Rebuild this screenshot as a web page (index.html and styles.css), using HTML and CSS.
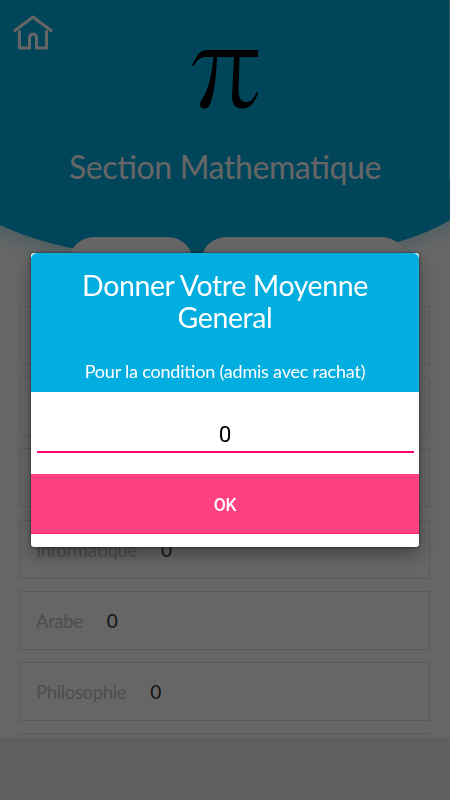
FILE: index.html
```html
<!DOCTYPE html>
<html lang="fr">
<head>
    <meta charset="UTF-8">
    <meta name="viewport" content="width=device-width, initial-scale=1.0">
    <title>Section Mathematique</title>
    <link rel="stylesheet" href="styles.css">
</head>
<body>
    <div class="page">
        <header class="header">
            <svg class="header-bg" viewBox="0 0 450 300">
                <path class="glow" d="M-30 0H480V204Q380 258 225 260Q60 258 -30 210Z"/>
                <path class="curve" d="M0 0H449V180H450V220Q385 260 225 262Q75 261 0 225Z"/>
            </svg>
            <svg class="home" viewBox="0 0 40 36">
                <path d="M2 15.500 20 2 38 15.500M6.500 16.500V33H16.500V23.500Q16.500 19 20 19T23.500 23.500V33H33.500V16.500"/>
            </svg>
            <svg class="pi" viewBox="0 0 66 60">
                <path d="M66 1V8H47.500L46.500 40C46.500 49 49 53 54 53C59 53 62 49 64.500 43L66 44C63 54 57 59.500 50 59.500C43 59.500 40 55 40 47L42 8H25C24 27 23 42 18.500 54C17 58 15 59.500 12.500 59.500C9.500 59.500 8 57.500 8 55.500C8 53 10 50 13 45C17 37 20 24 21.500 8H15C8 8 6 10 1.500 17L0 16L5 7C8 2 11 1 18 1Z"/>
            </svg>
            <h1>Section Mathematique</h1>
            <div class="tabs">
                <div class="tab tab-small"></div>
                <div class="tab tab-large"></div>
            </div>
        </header>

        <main class="grades">
            <div class="grade"></div>
            <div class="grade"></div>
            <div class="grade"></div>
            <div class="grade"><label>Informatique</label><span>0</span></div>
            <div class="grade"><label>Arabe</label><span>0</span></div>
            <div class="grade"><label>Philosophie</label><span>0</span></div>
            <div class="grade"></div>
        </main>

        <footer class="bottom-bar"></footer>
    </div>

    <div class="overlay">
        <div class="dialog">
            <div class="dialog-header">
                <h2>Donner Votre Moyenne General</h2>
                <p>Pour la condition (admis avec rachat)</p>
            </div>
            <div class="dialog-body">
                <input class="moyenne" type="text" value="0">
            </div>
            <button class="ok">OK</button>
        </div>
    </div>
</body>
</html>
```

FILE: styles.css
```css
* {
    box-sizing: border-box;
}

body {
    margin: 0;
    font-family: Lato, sans-serif;
    font-feature-settings: "liga" 1;
    overflow: hidden;
}

.page {
    display: flex;
    flex-direction: column;
    height: 800px;
    background-color: #fff;
}

.header {
    position: relative;
    display: flex;
    flex-direction: column;
    align-items: center;
    flex: none;
    height: 306px;
    padding-top: 49px;
}

.header-bg {
    position: absolute;
    top: 0;
    left: 0;
    width: 450px;
    height: 300px;
}

.glow {
    fill: #00addf;
    opacity: 0.55;
    filter: blur(12px);
}

.curve {
    fill: #00addf;
}

.home {
    position: absolute;
    top: 15px;
    left: 13px;
    width: 40px;
    height: 36px;
    fill: none;
    stroke: #fff;
    stroke-width: 3;
    stroke-linecap: round;
    stroke-linejoin: round;
}

.pi {
    position: relative;
    width: 66px;
    height: 60px;
}

h1 {
    position: relative;
    margin: 38px 0 0;
    color: #fff;
    font-size: 32px;
    font-weight: 400;
    line-height: 40px;
    letter-spacing: -0.38px;
}

.tabs {
    position: relative;
    display: flex;
    gap: 8px;
    margin: 50px 0 0 26px;
}

.tab {
    height: 50px;
    border-radius: 25px;
    background-color: #fff;
}

.tab-small {
    width: 124px;
}

.tab-large {
    width: 206px;
}

.grades {
    display: flex;
    flex-direction: column;
    flex: 1;
    gap: 12.2px;
    min-height: 0;
    padding: 0 20px;
    overflow: hidden;
}

.grade {
    display: flex;
    align-items: center;
    flex: none;
    gap: 24px;
    height: 59px;
    padding: 1px 0 0 15px;
    border: 1px solid #e0e0e0;
    border-radius: 1px;
    font-size: 18.5px;
    letter-spacing: -0.35px;
}

.grade label {
    color: #c4c4c4;
}

.grade span {
    color: #333;
    font-size: 19px;
}

.bottom-bar {
    flex: none;
    height: 62px;
    background-color: #eee;
}

.overlay {
    position: fixed;
    inset: 0;
    display: flex;
    align-items: center;
    justify-content: center;
    background-color: rgba(0, 0, 0, 0.6);
}

.dialog {
    width: 388px;
    height: 294px;
    border-radius: 3px;
    background-color: #fff;
    box-shadow: 0 8px 18px rgba(0, 0, 0, 0.35), 0 0 3px rgba(0, 0, 0, 0.6);
    overflow: hidden;
}

.dialog-header {
    height: 139px;
    padding-top: 16px;
    border-radius: 6px 6px 0 0;
    background-color: #02addf;
    color: #fff;
    text-align: center;
}

.dialog-header h2 {
    width: 310px;
    margin: 0 auto;
    font-size: 28.5px;
    font-weight: 400;
    line-height: 32px;
    letter-spacing: -0.4px;
}

.dialog-header p {
    margin: 27px 0 0;
    font-size: 18px;
    line-height: 22px;
    letter-spacing: -0.2px;
}

.dialog-body {
    height: 82px;
    padding: 22px 5.5px 0;
}

.moyenne {
    display: block;
    width: 100%;
    height: 39px;
    padding: 3px 0 0;
    border: none;
    border-bottom: 2px solid #ff0072;
    color: #000;
    font-family: Roboto, sans-serif;
    font-size: 22.5px;
    text-align: center;
    outline: none;
}

.ok {
    display: block;
    width: 100%;
    height: 60px;
    padding: 2px 0 0;
    border: none;
    border-bottom: 1px solid #f01f68;
    background-color: #ff4081;
    color: #fff;
    font-family: Roboto, sans-serif;
    font-size: 17.5px;
    font-weight: 500;
    letter-spacing: -0.3px;
}
```
